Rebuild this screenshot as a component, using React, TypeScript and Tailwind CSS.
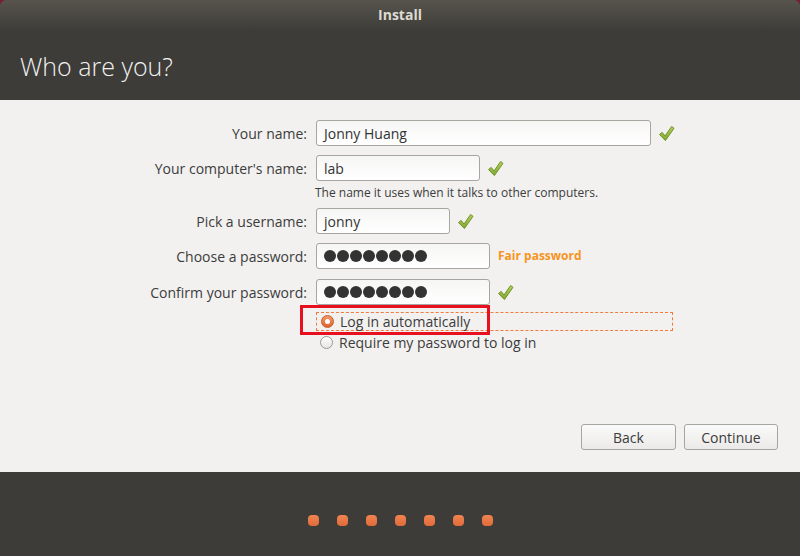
import React from "react";

const font = { fontFamily: '"Open Sans", "Noto Sans", sans-serif' };

function Check() {
  return (
    <svg width="17" height="17" viewBox="0 0 17 17" className="shrink-0">
      <defs>
        <linearGradient id="chk" x1="0" y1="0" x2="0" y2="1">
          <stop offset="0" stopColor="#b5d264" />
          <stop offset="1" stopColor="#7ea52f" />
        </linearGradient>
      </defs>
      <path
        d="M1.5 9.5 L4.2 7.4 L7 11 L13.6 1.5 L16 3.3 L7.4 15.6 Z"
        fill="url(#chk)"
        stroke="#6f9424"
        strokeWidth="1"
        strokeLinejoin="round"
      />
    </svg>
  );
}

function Field({
  label,
  value,
  width,
  password,
  after,
}: {
  label: string;
  value?: string;
  width: string;
  password?: boolean;
  after?: React.ReactNode;
}) {
  return (
    <div className="flex items-center h-[26px]">
      <div className="w-[308px] pr-[1px] text-right text-[14px] text-[#3c3c3c]">{label}</div>
      <div
        className={`ml-[8px] h-[26px] ${width} rounded-[3px] border border-[#a7a59f] bg-gradient-to-b from-[#f6f6f5] to-white flex items-center px-[7px] text-[14px] text-[#333]`}
      >
        {password ? (
          <span className="flex gap-[1px]">
            {Array.from({ length: 8 }).map((_, i) => (
              <span key={i} className="w-[12px] h-[12px] rounded-full bg-[#333]" />
            ))}
          </span>
        ) : (
          value
        )}
      </div>
      <div className="ml-[7px] flex items-center">{after}</div>
    </div>
  );
}

export default function App() {
  return (
    <div className="w-[800px] h-[556px] bg-[#7a1a2e] overflow-hidden" style={font}>
      <div className="h-full flex flex-col rounded-t-[6px] overflow-hidden">
        {/* title bar */}
        <div className="h-[30px] bg-gradient-to-b from-[#57544d] to-[#3e3d39] flex items-center justify-center pb-[1px] text-[14px] font-bold text-[#dfdbd2]">
          Install
        </div>
        {/* header */}
        <div className="h-[70px] bg-[#3d3c38] flex items-center px-[20px] pt-[4px]">
          <h1 className="text-[25px] font-light text-[#f2f1f0]">Who are you?</h1>
        </div>
        {/* body */}
        <div className="flex-1 bg-[#f2f1f0] flex flex-col pt-[20px]">
          <Field label="Your name:" value="Jonny Huang" width="w-[335px]" after={<Check />} />
          <div className="mt-[9px]">
            <Field label="Your computer's name:" value="lab" width="w-[164px]" after={<Check />} />
          </div>
          <div className="pl-[315px] mt-[4px] text-[12px] text-[#3c3c3c] leading-[16px]">
            The name it uses when it talks to other computers.
          </div>
          <div className="mt-[7px]">
            <Field label="Pick a username:" value="jonny" width="w-[134px]" after={<Check />} />
          </div>
          <div className="mt-[9px]">
            <Field
              label="Choose a password:"
              password
              width="w-[174px]"
              after={<span className="text-[12px] font-bold text-[#f7941d] ml-[1px]">Fair password</span>}
            />
          </div>
          <div className="mt-[10px]">
            <Field label="Confirm your password:" password width="w-[174px]" after={<Check />} />
          </div>
          {/* radios */}
          <div className="pl-[316px] mt-[7px] relative">
            <div className="w-[357px] h-[19px] border border-dashed border-[#f27a3d] flex items-center pl-[4px] gap-[6px] text-[14px] text-[#3c3c3c]">
              <span className="w-[13px] h-[13px] rounded-full bg-gradient-to-b from-[#f39a6c] to-[#e1622b] border border-[#c95a2a] flex items-center justify-center">
                <span className="w-[5px] h-[5px] rounded-full bg-white" />
              </span>
              Log in automatically
            </div>
            <div className="absolute left-[300px] top-[-7px] w-[190px] h-[30px] border-[3px] border-[#e8101f]" />
            <div className="h-[22px] flex items-center pl-[4px] gap-[6px] text-[14px] text-[#3c3c3c]">
              <span className="w-[13px] h-[13px] rounded-full bg-gradient-to-b from-white to-[#e6e5e3] border border-[#9c9a95]" />
              Require my password to log in
            </div>
          </div>
          <div className="flex-1" />
          <div className="flex justify-end gap-[8px] pr-[22px] pb-[22px]">
            <button className="w-[95px] h-[26px] rounded-[3px] border border-[#a7a59f] bg-gradient-to-b from-[#fafafa] to-[#ebeae8] text-[14px] text-[#3c3c3c]">
              Back
            </button>
            <button className="w-[94px] h-[26px] rounded-[3px] border border-[#a7a59f] bg-gradient-to-b from-[#fafafa] to-[#ebeae8] text-[14px] text-[#3c3c3c]">
              Continue
            </button>
          </div>
        </div>
        {/* bottom */}
        <div className="h-[84px] bg-[#3d3c38] flex items-center justify-center gap-[18px] pt-[12px]">
          {Array.from({ length: 7 }).map((_, i) => (
            <span key={i} className="w-[11px] h-[11px] rounded-[4px] bg-gradient-to-b from-[#f08550] to-[#e06a3a]" />
          ))}
        </div>
      </div>
    </div>
  );
}
